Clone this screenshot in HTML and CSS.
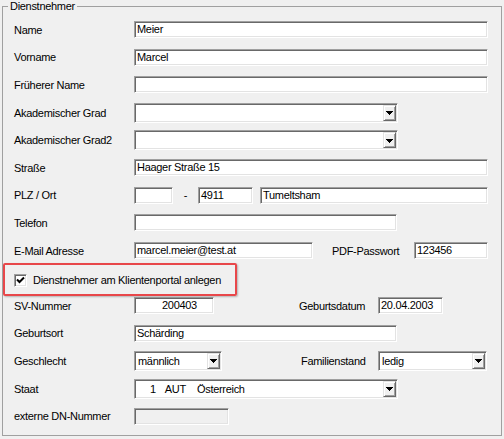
FILE: index.html
```html
<!DOCTYPE html>
<html lang="de">
<head>
<meta charset="utf-8">
<title>Dienstnehmer</title>
<link rel="stylesheet" href="styles.css">
</head>
<body>
<fieldset class="group">
  <legend class="legend">Dienstnehmer</legend>
  <div class="rows">
    <div class="row"><span class="lbl">Name</span><div class="edit w-full">Meier</div></div>
    <div class="row"><span class="lbl">Vorname</span><div class="edit w-full">Marcel</div></div>
    <div class="row"><span class="lbl">Früherer Name</span><div class="edit w-full"></div></div>
    <div class="row"><span class="lbl">Akademischer Grad</span>
      <div class="combo w-combo"><span class="ctext"></span><span class="btn"><svg class="arrow" width="7" height="4" viewBox="0 0 7 4"><path d="M0 0h7v1h-1v1h-1v1h-1v1h-1v-1h-1v-1h-1v-1h-1z"/></svg></span></div>
    </div>
    <div class="row"><span class="lbl">Akademischer Grad2</span>
      <div class="combo w-combo"><span class="ctext"></span><span class="btn"><svg class="arrow" width="7" height="4" viewBox="0 0 7 4"><path d="M0 0h7v1h-1v1h-1v1h-1v1h-1v-1h-1v-1h-1v-1h-1z"/></svg></span></div>
    </div>
    <div class="row"><span class="lbl">Straße</span><div class="edit w-full">Haager Straße 15</div></div>
    <div class="row"><span class="lbl">PLZ / Ort</span>
      <div class="edit w-plz1"></div><span class="dash">-</span><div class="edit w-plz2">4911</div><div class="edit w-plz3">Tumeltsham</div>
    </div>
    <div class="row"><span class="lbl">Telefon</span><div class="edit w-tel"></div></div>
    <div class="row"><span class="lbl">E-Mail Adresse</span><div class="edit w-email">marcel.meier@test.at</div><span class="lbl2 l-pdf">PDF-Passwort</span><div class="edit w-pdf">123456</div></div>
    <div class="row cbrow">
      <span class="check"><svg width="9" height="9" viewBox="0 0 9 9"><path d="M1 3.5 L3.5 6 L8 1.5" fill="none" stroke="#000" stroke-width="2"/></svg></span>
      <span class="cblabel">Dienstnehmer am Klientenportal anlegen</span>
    </div>
    <div class="row"><span class="lbl">SV-Nummer</span><div class="edit w-sv">200403</div><span class="lbl2 l-geb">Geburtsdatum</span><div class="edit w-date">20.04.2003</div></div>
    <div class="row"><span class="lbl">Geburtsort</span><div class="edit w-tel">Schärding</div></div>
    <div class="row"><span class="lbl">Geschlecht</span>
      <div class="combo w-gesch"><span class="ctext">männlich</span><span class="btn"><svg class="arrow" width="7" height="4" viewBox="0 0 7 4"><path d="M0 0h7v1h-1v1h-1v1h-1v1h-1v-1h-1v-1h-1v-1h-1z"/></svg></span></div>
      <span class="lbl2 l-fam">Familienstand</span>
      <div class="combo w-fam"><span class="ctext">ledig</span><span class="btn"><svg class="arrow" width="7" height="4" viewBox="0 0 7 4"><path d="M0 0h7v1h-1v1h-1v1h-1v1h-1v-1h-1v-1h-1v-1h-1z"/></svg></span></div>
    </div>
    <div class="row"><span class="lbl">Staat</span>
      <div class="combo w-combo"><span class="ctext staat"><span class="s-num">1</span><span class="s-code">AUT</span><span class="s-name">Österreich</span></span><span class="btn"><svg class="arrow" width="7" height="4" viewBox="0 0 7 4"><path d="M0 0h7v1h-1v1h-1v1h-1v1h-1v-1h-1v-1h-1v-1h-1z"/></svg></span></div>
    </div>
    <div class="row"><span class="lbl">externe DN-Nummer</span><div class="edit disabled w-ext"></div></div>
  </div>
</fieldset>
</body>
</html>
```
FILE: styles.css
```css
html, body {
  margin: 0;
  padding: 0;
  background: #f0f0f0;
}
body {
  font-family: "Liberation Sans", Arial, sans-serif;
  font-size: 11px;
  letter-spacing: -0.3px;
  color: #000;
  width: 504px;
  height: 439px;
  overflow: hidden;
}
.group {
  margin: 0 0 0 2px;
  padding: 0;
  width: 500px;
  box-sizing: border-box;
  border: 1px solid #a0a0a0;
  min-width: 0;
}
.legend {
  margin-left: 5px;
  padding: 0 2px;
  line-height: 13px;
  font-size: 11px;
}
.rows {
  padding: 3px 0 5px 11px;
  display: flex;
  flex-direction: column;
}
.row {
  height: 27.6px;
  display: flex;
  align-items: center;
}
.lbl {
  flex: none;
  width: 120px;
  line-height: 13px;
  padding-top: 1px;
}
.lbl2 {
  flex: none;
  line-height: 13px;
  padding-top: 1px;
}
.edit, .combo {
  flex: none;
  box-sizing: border-box;
  background: #fff;
  border: 1px solid;
  border-color: #a0a0a0 #fff #fff #a0a0a0;
  box-shadow: inset 1px 1px 0 #696969, inset -1px -1px 0 #e3e3e3;
  padding: 1px;
  white-space: nowrap;
  overflow: hidden;
}
.edit {
  height: 17px;
  line-height: 13px;
  padding-left: 2px;
}
.edit.disabled {
  background: #f0f0f0;
}
.combo {
  height: 20px;
  display: flex;
  align-items: stretch;
}
.ctext {
  flex: 1;
  line-height: 16px;
  padding-left: 2px;
  overflow: hidden;
}
.btn {
  flex: none;
  width: 13px;
  box-sizing: border-box;
  background: #f0f0f0;
  border: 1px solid;
  border-color: #e3e3e3 #696969 #696969 #e3e3e3;
  box-shadow: inset 1px 1px 0 #fff, inset -1px -1px 0 #a0a0a0;
  display: flex;
  align-items: center;
  justify-content: center;
  padding-top: 1px;
}
.arrow {
  display: block;
  shape-rendering: crispEdges;
}
.arrow path { fill: #000; }

.w-full { width: 354px; }
.w-combo { width: 264px; }
.w-tel { width: 263px; }
.w-plz1 { width: 39px; }
.dash { flex: none; width: 25px; text-align: center; line-height: 13px; }
.w-plz2 { width: 55px; }
.w-plz3 { width: 228px; margin-left: 7px; }
.w-email { width: 179px; }
.l-pdf { margin-left: 19px; width: 82px; }
.w-pdf { width: 74px; }
.w-sv { width: 80px; padding-left: 27px; }
.l-geb { margin-left: 85px; width: 79px; }
.w-date { width: 65px; }
.w-gesch { width: 88px; }
.l-fam { margin-left: 79px; width: 77px; }
.w-fam { width: 109px; }
.w-ext { width: 95px; }

.staat { display: flex; }
.s-num { margin-left: 12px; }
.s-code { margin-left: 9px; }
.s-name { margin-left: 11px; }

.cbrow {
  position: relative;
  padding-top: 4px;
  box-sizing: border-box;
}
.cbrow::before {
  content: "";
  position: absolute;
  left: -11px;
  top: -1px;
  width: 234px;
  height: 33px;
  box-sizing: border-box;
  border: 2px solid #e8474a;
  border-radius: 2px;
  box-shadow: 1px 1px 2px rgba(0, 0, 0, 0.25);
}
.check {
  flex: none;
  width: 13px;
  height: 13px;
  box-sizing: border-box;
  background: #fff;
  border: 1px solid;
  border-color: #a0a0a0 #fff #fff #a0a0a0;
  box-shadow: inset 1px 1px 0 #696969, inset -1px -1px 0 #e3e3e3;
  display: flex;
  align-items: center;
  justify-content: center;
}
.check svg { display: block; }
.cblabel {
  margin-left: 6px;
  line-height: 13px;
}
```
